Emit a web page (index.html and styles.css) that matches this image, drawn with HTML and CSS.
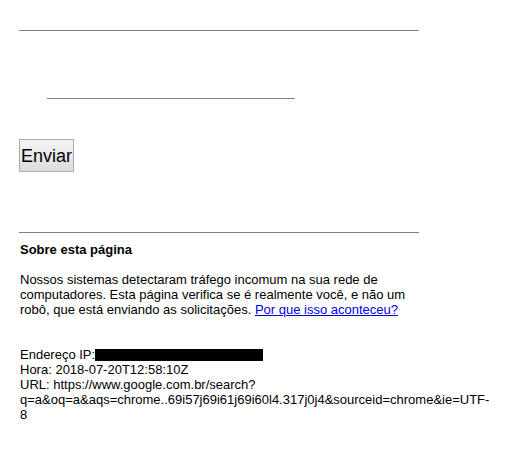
FILE: index.html
```html
<!DOCTYPE html>
<html>
<head>
<meta charset="utf-8">
<link rel="stylesheet" href="styles.css">
</head>
<body>
<div class="page">
  <div class="rule"></div>
  <form class="captcha">
    <div class="field-line"></div>
    <button type="button" class="submit">Enviar</button>
  </form>
  <div class="rule"></div>
  <div class="info">
    <b class="title">Sobre esta página</b>
    <p class="desc">Nossos sistemas detectaram tráfego incomum na sua rede de computadores. Esta página verifica se é realmente você, e não um robô, que está enviando as solicitações. <a href="#">Por que isso aconteceu?</a></p>
    <div class="meta">
      <div>Endereço IP:<span class="redact"></span></div>
      <div>Hora: 2018-07-20T12:58:10Z</div>
      <div>URL: https://www.google.com.br/search?<wbr>q=a&amp;oq=a&amp;aqs=chrome..69i57j69i61j69i60l4.317j0j4&amp;sourceid=chrome&amp;ie=UTF-<wbr>8</div>
    </div>
  </div>
</div>
</body>
</html>
```
FILE: styles.css
```css
html, body {
  margin: 0;
  padding: 0;
  background: #fff;
}
body {
  font-family: "Liberation Sans", Arial, sans-serif;
  color: #000;
}
.page {
  width: 400px;
  padding: 30px 0 0 19px;
}
.rule {
  height: 1px;
  background: #808080;
}
.captcha {
  margin: 0;
  padding-top: 67px;
  height: 201px;
  box-sizing: border-box;
}
.field-line {
  margin-left: 28px;
  width: 248px;
  height: 1px;
  background: #808080;
}
.submit {
  display: block;
  margin-top: 40px;
  font-family: "Liberation Sans", Arial, sans-serif;
  font-size: 18px;
  line-height: 22px;
  height: 33px;
  padding: 0 1px;
  border: 1px solid #adadad;
  border-radius: 0;
  background: linear-gradient(#f4f4f4, #dcdcdc);
  color: #000;
}
.info {
  font-size: 13px;
  line-height: 15px;
  padding-top: 9px;
  padding-left: 1px;
}
.title {
  display: block;
}
.desc {
  margin: 15px 0 0 0;
}
.desc a {
  color: #0000ee;
}
.meta {
  margin-top: 30px;
  width: 475px;
}
.redact {
  display: inline-block;
  vertical-align: -2px;
  width: 168px;
  height: 12px;
  margin-left: 0;
  background: #000;
}
```
